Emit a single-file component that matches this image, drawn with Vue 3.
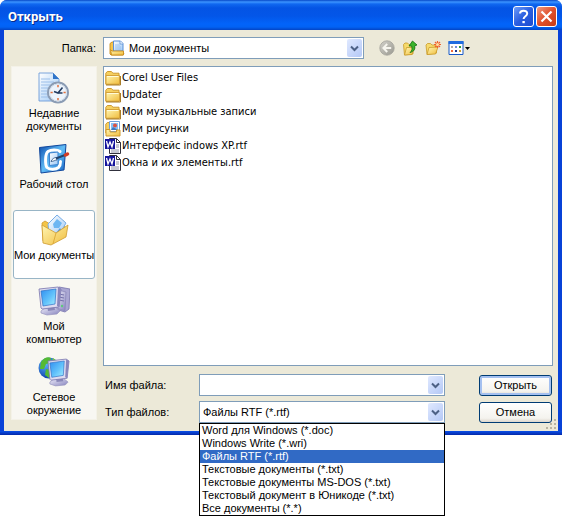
<script setup>
import { ref } from 'vue'

const places = [
  { id: 'recent', lines: ['Недавние', 'документы'] },
  { id: 'desktop', lines: ['Рабочий стол'] },
  { id: 'documents', lines: ['Мои документы'] },
  { id: 'computer', lines: ['Мой', 'компьютер'] },
  { id: 'network', lines: ['Сетевое', 'окружение'] },
]
const activePlace = ref('documents')

const files = [
  { name: 'Corel User Files', kind: 'folder' },
  { name: 'Updater', kind: 'folder' },
  { name: 'Мои музыкальные записи', kind: 'folder' },
  { name: 'Мои рисунки', kind: 'pictures' },
  { name: 'Интерфейс indows XP.rtf', kind: 'word' },
  { name: 'Окна и их элементы.rtf', kind: 'word' },
]

const types = [
  'Word для Windows (*.doc)',
  'Windows Write (*.wri)',
  'Файлы RTF (*.rtf)',
  'Текстовые документы (*.txt)',
  'Текстовые документы MS-DOS (*.txt)',
  'Текстовый документ в Юникоде (*.txt)',
  'Все документы (*.*)',
]
const type = ref(types[2])
const fileName = ref('')
</script>

<template>
  <div class="page">
    <svg class="defs" aria-hidden="true">
      <defs>
        <linearGradient id="gFolder" x1="0" y1="0" x2="1" y2="1">
          <stop offset="0" stop-color="#fff6b4" /><stop offset="1" stop-color="#f0bc3c" />
        </linearGradient>
        <linearGradient id="gScreen" x1="0" y1="0" x2="1" y2="1">
          <stop offset="0" stop-color="#2f8ef0" /><stop offset=".55" stop-color="#62c2fb" /><stop offset="1" stop-color="#a6f0ff" />
        </linearGradient>
        <linearGradient id="gCase" x1="0" y1="0" x2="1" y2="1">
          <stop offset="0" stop-color="#f0effb" /><stop offset="1" stop-color="#8582bd" />
        </linearGradient>
        <linearGradient id="gBlue" x1="0" y1="0" x2="1" y2="1">
          <stop offset="0" stop-color="#0a4cae" /><stop offset=".5" stop-color="#62bdf6" /><stop offset="1" stop-color="#1462c4" />
        </linearGradient>
        <linearGradient id="gPaper" x1="0" y1="0" x2="1" y2="1">
          <stop offset="0" stop-color="#ffffff" /><stop offset="1" stop-color="#9cc8f6" />
        </linearGradient>
        <radialGradient id="gGlobe" cx=".35" cy=".3" r=".75">
          <stop offset="0" stop-color="#5cb8fb" /><stop offset="1" stop-color="#0b38a8" />
        </radialGradient>
        <linearGradient id="gBack" x1="0" y1="0" x2="1" y2="1">
          <stop offset="0" stop-color="#d2d1ca" /><stop offset="1" stop-color="#9a9990" />
        </linearGradient>
        <symbol id="monitor" viewBox="0 0 24 30">
          <path d="M3 25 8 21h9l5 4-3 3-10 1-6-2z" fill="url(#gCase)" stroke="#9997c0" stroke-width=".7" />
          <path d="M9 19h7l1 5-7 1z" fill="#8a88b8" />
          <path d="M1 3 20 1l3 2-2 18-17 2-1-1z" fill="#dedcf0" stroke="#7773ad" stroke-width=".8" />
          <path d="M20 1l3 2-2 18-2-1z" fill="#8986bb" />
          <path d="M3 5 18 3 17 18 5 20z" fill="url(#gScreen)" stroke="#3171c6" stroke-width=".7" />
        </symbol>
      </defs>
    </svg>

    <main class="dialog" role="dialog" aria-labelledby="dialog-title">
      <header class="titlebar">
        <h1 id="dialog-title">Открыть</h1>
        <button class="caption help" type="button" aria-label="Справка">
          <svg viewBox="0 0 19 19"><path d="M6 6.5C6 2.8 13.2 2.6 13.2 6.5c0 2.6-3.6 2.8-3.6 5.5" fill="none" stroke="#fff" stroke-width="2" /><path d="M8.4 14h2.4v2.2H8.4z" fill="#fff" /></svg>
        </button>
        <button class="caption close" type="button" aria-label="Закрыть">
          <svg viewBox="0 0 19 19"><path d="m4.5 4.5 10 10m0-10-10 10" fill="none" stroke="#fff" stroke-width="2.2" /></svg>
        </button>
      </header>

      <form class="body" @submit.prevent>
        <div class="lookin">
          <label class="lookin-label" for="folder">Папка:</label>
          <div class="combo folder-combo">
            <svg class="icon16" viewBox="0 0 16 16">
              <path d="M1 3.5 3 2h3v11h9l-1 2H2l-1-1z" fill="#f5c44c" stroke="#c98c1c" stroke-width=".9" />
              <path d="M4.5 1h7l2.5 2.5V11H4.5z" fill="url(#gPaper)" stroke="#5b8fd6" />
              <path d="M11 1v3h3" fill="#fff" stroke="#5b8fd6" stroke-width=".8" />
              <path d="M6 5h5M6 7h6M6 9h6" stroke="#8fb9ea" stroke-width=".8" />
              <path d="M1.5 9.500 3 11h11.500v4h-12z" fill="url(#gFolder)" stroke="#c98c1c" stroke-width=".9" />
            </svg>
            <select id="folder"><option>Мои документы</option></select>
            <span class="arrow"><svg viewBox="0 0 9 7"><path d="m1 1.5 3.5 3.5L8 1.5" /></svg></span>
          </div>
          <nav class="tools" aria-label="Навигация">
            <button type="button" aria-label="Назад" disabled>
              <svg class="icon16" viewBox="0 0 16 16">
                <circle cx="8" cy="8" r="7.2" fill="url(#gBack)" stroke="#a3a29a" stroke-width=".8" />
                <path d="M8.2 4 4.4 8l3.8 4M5 8h7.2" fill="none" stroke="#f6f5ee" stroke-width="2" />
              </svg>
            </button>
            <button type="button" aria-label="На один уровень вверх">
              <svg class="icon16" viewBox="0 0 16 16">
                <path d="M1.5 4.500 3 3h2.500L7 4.500h4V14l-8.500 1z" fill="#f6da6c" stroke="#c99a2a" stroke-width=".8" />
                <path d="m2.500 15 2-7.500h8l-2.500 7z" fill="url(#gFolder)" stroke="#c99a2a" stroke-width=".8" />
                <path d="M8 12.500c2.200-1.500 2.400-4 1.600-6.500H7l3.500-5L15 5l-2.400.8c.9 3.200-.6 6-4.600 6.700z" fill="#3bb42c" stroke="#136f10" stroke-width=".8" />
              </svg>
            </button>
            <button type="button" aria-label="Создание новой папки">
              <svg class="icon16" viewBox="0 0 16 16">
                <path d="M1 5 2.500 3.500h3L7 5h4.500v8L2 14.500z" fill="#f6da6c" stroke="#c99a2a" stroke-width=".8" />
                <path d="m2 14.500 2-7 9-.5-2.500 7z" fill="url(#gFolder)" stroke="#c99a2a" stroke-width=".8" />
                <path d="M12.500 1v7M9 4.500h7M10 2l5 5M15 2l-5 5" stroke="#f0602c" stroke-width="1.200" />
                <circle cx="12.500" cy="4.500" r="1.500" fill="#ffe0a0" />
              </svg>
            </button>
            <button class="view" type="button" aria-label="Меню Вид">
              <svg class="icon16" viewBox="0 0 16 16">
                <path d="M1 1.500h14v13H1z" fill="#fff" stroke="#1658c8" />
                <path d="M.5 1h15v3H.5z" fill="#1f6ce0" />
                <path d="M3 6h2v2H3z" fill="#b0aaa4" /><path d="M7 6h2v2H7z" fill="#6d8de0" /><path d="M11 6h2v2h-2z" fill="#2f9a3a" />
                <path d="M3 10h2v2H3z" fill="#f06a3c" /><path d="M7 10h2v2H7z" fill="#20368c" /><path d="M11 10h2v2h-2z" fill="#d0a030" />
              </svg>
              <svg class="caret" viewBox="0 0 5 3"><path d="M0 0h5L2.500 3z" /></svg>
            </button>
          </nav>
        </div>

        <div class="content">
          <nav class="places" aria-label="Папки">
            <button
              v-for="place in places"
              :key="place.id"
              type="button"
              class="place"
              :class="{ active: place.id === activePlace }"
              @click="activePlace = place.id"
            >
              <svg v-if="place.id === 'recent'" class="icon32" viewBox="0 0 32 32">
                <path d="M1 1h14l6 6v22H1z" fill="url(#gPaper)" stroke="#6e9bd8" stroke-width=".9" />
                <path d="M15 1v6h6z" fill="#2f74c8" />
                <path d="M3 7h9M3 10h13M3 13h9M3 16h7M3 19h6M3 22h6M3 25h8" stroke="#9cbfe9" />
                <circle cx="20" cy="20.500" r="10" fill="#fff" stroke="#8b9cb4" stroke-width="2" />
                <circle cx="20" cy="20.500" r="8.500" fill="#edf4fc" stroke="#d2deec" />
                <path d="M20 13v2.200M20 26v2.200M12.500 20.500h2.200M25.500 20.500h2.200" stroke="#e2703c" stroke-width="1.500" />
                <path d="m16 19.500 4 1.500 4.500-5.500M20 21h4.500" fill="none" stroke="#243c60" stroke-width="1.600" />
              </svg>
              <svg v-else-if="place.id === 'desktop'" class="icon32" viewBox="0 0 32 32">
                <path d="M1.500 4.500 28 1.500l-2 25.500-23 3z" fill="url(#gBlue)" stroke="#10479c" />
                <path d="M22 8.500C19 6.200 13 6.500 10 8.500 7 10.500 7 22 9 24.500c2.500 2.500 9 2 11.500 0 1.500-1.500 2-4 2-6" fill="none" stroke="#fff" stroke-width="3" stroke-linecap="round" />
                <path d="m11.500 10 8.500-1v12.500l-8.500 1z" fill="url(#gPaper)" stroke="#3d83d0" />
                <path d="M13 18.500c1-2.500 3-4 5.500-4l.5 2.500c-2 0-3.500 1.500-6 1.500z" fill="#fff" stroke="#284f80" stroke-width=".8" />
                <path d="m18 15.500 9-3.500" stroke="#24446c" stroke-width="2" />
                <path d="m27.500 12 2-1" stroke="#d43c24" stroke-width="3.500" stroke-linecap="round" />
              </svg>
              <svg v-else-if="place.id === 'documents'" class="icon32" viewBox="0 0 32 32">
                <path d="m4 9 3-2 5 3 14-3 1 14-20 8-2-2z" fill="#f4c546" stroke="#cc9830" stroke-width=".8" />
                <path d="m10 10 9-9 9 8-8 14-9-4z" fill="url(#gPaper)" stroke="#78aee8" />
                <path d="m15 10 4-5 5 4-3 5-5 0z" fill="#6db6f2" /><path d="m18 19 4-5 2 3-4 5z" fill="#4f9be2" />
                <path d="m4 11 14 8 12-8-2 12-15 8-8-2z" fill="url(#gFolder)" stroke="#cf9c30" stroke-width=".8" />
                <path d="m18 19-3 11" stroke="#dfac3c" />
              </svg>
              <svg v-else-if="place.id === 'computer'" class="icon32" viewBox="0 0 32 32">
                <path d="m17 5 4-3 11 2-1 20-4 3-10-3z" fill="#aaa7d3" stroke="#7773ad" stroke-width=".8" />
                <path d="m20 5 8 2-1 19-8-3z" fill="url(#gCase)" stroke="#8885b9" stroke-width=".7" />
                <path d="m21 9 5 1M21 12l5 1M21 15l5 1" stroke="#7471aa" />
                <circle cx="24" cy="21" r="1.200" fill="#5ccb7a" />
                <use href="#monitor" x="0" y="1" width="24" height="30" />
              </svg>
              <svg v-else class="icon32" viewBox="0 0 32 32">
                <circle cx="11" cy="12" r="10.500" fill="url(#gGlobe)" />
                <path d="M3 6c4-6 8-5 10-4l-1 5-4 1-2 5-4 0zM8 13l5 1 1 3-3 5-4-3z" fill="#55ba35" />
                <path d="m15 2 4 3 1 5-5 1-2-4z" fill="#70cc48" />
                <use href="#monitor" x="9" y="2" width="23" height="29" />
              </svg>
              <span v-for="line in place.lines" :key="line">{{ line }}</span>
            </button>
          </nav>

          <div class="right">
            <ul class="files" aria-label="Файлы">
              <li v-for="file in files" :key="file.name">
                <svg v-if="file.kind === 'folder'" class="icon16" viewBox="0 0 16 16">
                  <path d="M.8 3.200 2.300 1.500h4L8 3.200h6v11H.8z" fill="#f5d060" stroke="#cf9a30" />
                  <path d="M1 5.500h13.500v8.700H1z" fill="url(#gFolder)" stroke="#d5a23a" />
                  <path d="M2 6.500h11.500" stroke="#fffbd8" /><path d="M1 15h14.500V6" fill="none" stroke="#a87c28" />
                </svg>
                <svg v-else-if="file.kind === 'pictures'" class="icon16" viewBox="0 0 16 16">
                  <path d="M.8 3.200 2.300 1.500h3V12H.8z" fill="#f5d060" stroke="#cf9a30" />
                  <path d="M4.500.5h10v10h-10z" fill="#fff" stroke="#6fa0dc" />
                  <path d="M6 2h7v7H6z" fill="#87c0f5" /><circle cx="10" cy="4.500" r="2" fill="#dc5040" /><path d="m6 9 2-3 5 3z" fill="#3d78c0" />
                  <path d="M1 8.500h4V11h6.500V9h3.500v6H1z" fill="url(#gFolder)" stroke="#cf9a30" />
                </svg>
                <svg v-else class="icon16" viewBox="0 0 16 16">
                  <path d="M4.500.5h7l4 4v11h-11z" fill="#fff" stroke="#30303c" />
                  <path d="M11.500.5v4h4" fill="none" stroke="#30303c" />
                  <path d="M11 7h3M11 9h3M6 12h8M6 14h8" stroke="#8f93a6" />
                  <path d="M0 1h10v10H0z" fill="#14149c" />
                  <path d="m1.500 3 1.500 6 2-5 2 5 1.500-6" fill="none" stroke="#fff" stroke-width="1.300" />
                </svg>
                <span>{{ file.name }}</span>
              </li>
            </ul>

            <div class="fields">
              <label for="file-name">Имя файла:</label>
              <div class="combo">
                <input id="file-name" v-model="fileName" type="text" autocomplete="off" />
                <button class="arrow" type="button" aria-label="Показать список"><svg viewBox="0 0 9 7"><path d="m1 1.500 3.500 3.500L8 1.500" /></svg></button>
              </div>
              <button class="push default" type="submit">Открыть</button>

              <label for="file-type">Тип файлов:</label>
              <div class="combo">
                <select id="file-type" v-model="type">
                  <option v-for="item in types" :key="item">{{ item }}</option>
                </select>
                <span class="arrow"><svg viewBox="0 0 9 7"><path d="m1 1.500 3.500 3.500L8 1.500" /></svg></span>
                <ul class="popup" role="listbox" aria-label="Тип файлов">
                  <li
                    v-for="item in types"
                    :key="item"
                    role="option"
                    :aria-selected="item === type"
                    :class="{ selected: item === type }"
                    @click="type = item"
                  >{{ item }}</li>
                </ul>
              </div>
              <button class="push" type="button">Отмена</button>
            </div>
          </div>
        </div>
        <svg class="grip" viewBox="0 0 12 12" aria-hidden="true">
          <path d="M9 1h2v2H9zM5 5h2v2H5zM9 5h2v2H9zM1 9h2v2H1zM5 9h2v2H5zM9 9h2v2H9z" />
        </svg>
      </form>
    </main>
  </div>
</template>

<style>
body {
  background: #fff;
}
</style>

<style scoped>
* {
  box-sizing: border-box;
}
.page {
  min-height: 100vh;
}
.defs {
  position: absolute;
  width: 0;
  height: 0;
}
.dialog {
  border-radius: 7px 7px 0 0;
  background: #0842d8;
  font: 11px/13px "Liberation Sans", Arial, sans-serif;
  color: #000;
}
button,
input,
select {
  margin: 0;
  padding: 0;
  border: 0;
  background: none;
  font: inherit;
  color: inherit;
}
ul {
  margin: 0;
  padding: 0;
  list-style: none;
}
svg {
  display: block;
}
.titlebar {
  display: flex;
  align-items: center;
  gap: 2px;
  height: 30px;
  padding: 3px 5px 0 8px;
  border-radius: 7px 7px 0 0;
  background: linear-gradient(#0648c8 0, #3c94ff 2px, #1068f0 4px, #0454e4 8px, #0356e8 16px, #0264fa 24px, #0262f4 27px, #0344c4 30px);
}
h1 {
  flex: 1;
  margin: 0;
  font: bold 13px/18px Roboto, sans-serif;
  color: #fff;
  text-shadow: 1px 1px #0a2a86;
}
.caption {
  width: 21px;
  height: 21px;
  border: 1px solid #fff;
  border-radius: 3px;
}
.help {
  background: linear-gradient(135deg, #6c9cf8, #2a5ee0 50%, #1c4cd0);
}
.close {
  background: linear-gradient(135deg, #f09a80, #e0502c 50%, #c83c14);
}
.body {
  position: relative;
  margin: 0 4px;
  padding: 7px 5px 8px 7px;
  background: #ece9d8;
}
.dialog::after {
  content: "";
  display: block;
  height: 4px;
  background: linear-gradient(#0a50e8, #0428a8);
}
.lookin {
  display: flex;
  align-items: center;
}
.lookin-label {
  width: 92px;
  padding-right: 7px;
  text-align: right;
}
.combo {
  position: relative;
  display: flex;
  align-items: center;
  height: 22px;
  padding: 1px;
  border: 1px solid #7f9db9;
  background: #fff;
}
.folder-combo {
  flex: 0 1 261px;
  padding-left: 5px;
  gap: 4px;
}
.combo select,
.combo input {
  flex: 1;
  min-width: 0;
  height: 18px;
  appearance: none;
  outline: 0;
}
.arrow {
  display: grid;
  place-items: center;
  width: 15px;
  height: 18px;
  border-radius: 2px;
  background: linear-gradient(135deg, #e0e9ff, #b4c8f6);
  pointer-events: none;
}
.arrow svg {
  width: 9px;
  height: 7px;
  fill: none;
  stroke: #4d6185;
  stroke-width: 2;
}
.tools {
  display: flex;
  gap: 7px;
  margin-left: 15px;
}
.view {
  display: flex;
  align-items: center;
  gap: 1px;
}
.caret {
  width: 5px;
  height: 3px;
}
.icon16 {
  flex: none;
  width: 16px;
  height: 16px;
}
.icon32 {
  width: 32px;
  height: 32px;
  margin-bottom: 3px;
}
.content {
  display: flex;
  align-items: flex-start;
  gap: 6px;
  margin-top: 7px;
}
.places {
  flex: none;
  display: flex;
  flex-direction: column;
  gap: 2px;
  width: 86px;
  padding: 1px;
  border: 1px solid #f4f2e8;
  background: #f8f7f2;
}
.place {
  display: flex;
  flex-direction: column;
  align-items: center;
  height: 69px;
  padding-top: 3px;
  border: 1px solid transparent;
  border-radius: 3px;
  white-space: nowrap;
}
.place:last-child {
  height: 66px;
}
.place.active {
  border-color: #98b5c6;
  background: #fff;
}
.right {
  flex: 1;
  min-width: 0;
}
.files {
  min-height: 300px;
  padding: 2px 1px;
  border: 1px solid #7f9db9;
  background: #fff;
  font-family: "DejaVu Sans Condensed", "DejaVu Sans", sans-serif;
}
.files li {
  display: flex;
  align-items: center;
  gap: 1px;
  height: 17px;
}
.fields {
  display: grid;
  grid-template-columns: 94px minmax(0, 246px) 1fr;
  align-items: center;
  row-gap: 5px;
  padding: 8px 1px 0 2px;
}
.fields .combo select {
  padding-left: 2px;
}
.popup {
  position: absolute;
  z-index: 1;
  top: 21px;
  left: -1px;
  right: -1px;
  padding: 0;
  border: 1px solid #000;
  background: #fff;
}
.popup li {
  padding-left: 2px;
  white-space: nowrap;
}
.popup .selected {
  background: #316ac5;
  color: #fff;
}
.push {
  justify-self: end;
  width: 73px;
  height: 21px;
  border: 1px solid #003c74;
  border-radius: 3px;
  background: linear-gradient(#fff, #f4f3ee 80%, #dcd6cc);
}
.default {
  box-shadow: inset 0 0 0 2px #a4c0f0;
}
.grip {
  position: absolute;
  right: 1px;
  bottom: 1px;
  width: 12px;
  height: 12px;
  fill: #b8b4a2;
}
</style>
